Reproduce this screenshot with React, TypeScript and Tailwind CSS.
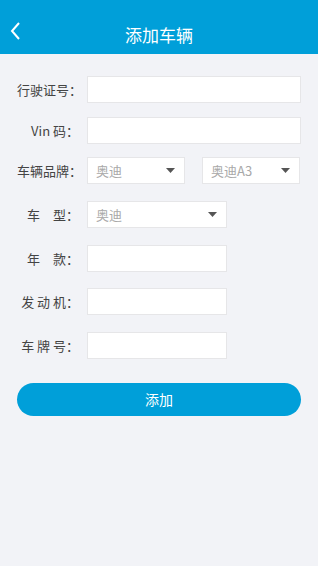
import React from "react";

const font = { fontFamily: '"Noto Sans CJK SC", "Noto Sans", sans-serif' };

function Caret() {
  return (
    <svg width="9" height="5" viewBox="0 0 9 5" className="shrink-0">
      <path d="M0 0 L9 0 L4.5 5 Z" fill="#555" />
    </svg>
  );
}

function Field({ label, children, top }: { label: React.ReactNode; children: React.ReactNode; top: string }) {
  return (
    <div className={`flex items-center h-[27px] ${top}`}>
      <div className="w-[62px] text-right text-[13px] text-[#444] whitespace-pre leading-none">{label}</div>
      <div className="ml-[8px] flex-1 flex items-center">{children}</div>
    </div>
  );
}

function Box({ w }: { w: string }) {
  return <div className={`h-[27px] bg-white border border-[#e6e6e8] ${w}`} />;
}

function Select({ text, w }: { text: string; w: string }) {
  return (
    <div className={`h-[27px] bg-white border border-[#e6e6e8] flex items-center justify-between pl-[8px] pr-[9px] ${w}`}>
      <span className="text-[13px] text-[#a8a8a8] leading-none">{text}</span>
      <Caret />
    </div>
  );
}

export default function App() {
  return (
    <div className="w-[318px] h-[566px] bg-[#f2f3f7] flex flex-col" style={font}>
      <div className="h-[54px] bg-[#009fd9] flex items-end pb-[11px] relative">
        <svg width="12" height="20" viewBox="0 0 12 20" className="absolute left-[9px] top-[21px]">
          <path d="M10 2 L3 10 L10 18" stroke="white" strokeWidth="2" fill="none" />
        </svg>
        <div className="w-full text-center text-white text-[17px] leading-none">添加车辆</div>
      </div>

      <div className="flex flex-col pl-[17px] pr-[17px] pt-[22px]">
        <Field label="行驶证号：" top="">
          <Box w="w-[214px]" />
        </Field>
        <Field label="Vin 码：" top="mt-[14px]">
          <Box w="w-[214px]" />
        </Field>
        <Field label="车辆品牌：" top="mt-[13px]">
          <div className="flex gap-[17px]">
            <Select text="奥迪" w="w-[98px]" />
            <Select text="奥迪A3" w="w-[98px]" />
          </div>
        </Field>
        <Field label="车　型：" top="mt-[17px]">
          <Select text="奥迪" w="w-[140px]" />
        </Field>
        <Field label="年　款：" top="mt-[17px]">
          <Box w="w-[140px]" />
        </Field>
        <Field label="发 动 机：" top="mt-[16px]">
          <Box w="w-[140px]" />
        </Field>
        <Field label="车 牌 号：" top="mt-[17px]">
          <Box w="w-[140px]" />
        </Field>

        <button className="mt-[24px] h-[33px] w-[284px] rounded-full bg-[#009fd9] text-white text-[14px]">
          添加
        </button>
      </div>
    </div>
  );
}
